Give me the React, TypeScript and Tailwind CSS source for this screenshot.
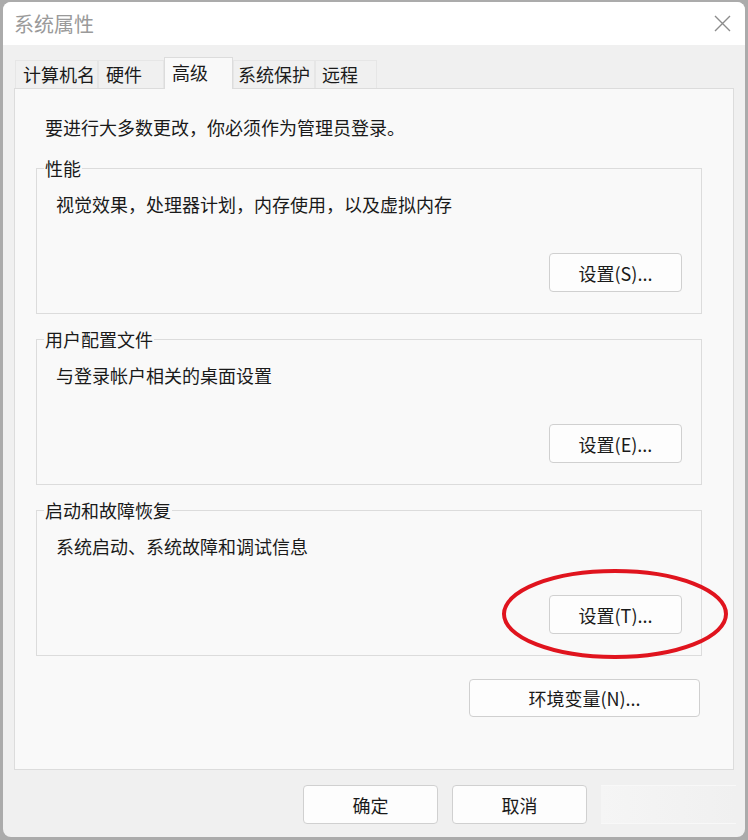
import React from "react";

const font = { fontFamily: '"Noto Sans CJK SC", "Microsoft YaHei", sans-serif' };

function Btn({ label, w, h = 39 }: { label: string; w: number; h?: number }) {
  return (
    <div
      className="flex items-center justify-center rounded-[4px] border border-[#d0d0d0] bg-[#fdfdfd] text-[18px] leading-[24px] text-[#1a1a1a]"
      style={{ width: w, height: h }}
    >
      {label}
    </div>
  );
}

function Group({ legend, text, btn }: { legend: string; text: string; btn: string }) {
  return (
    <fieldset className="ml-[21px] w-[666px] border border-[#dcdcdc] pl-[7px] pr-[19px] pb-[21px]">
      <legend className="px-[1px] text-[18px] leading-[24px] text-[#1a1a1a]">{legend}</legend>
      <p className="ml-[12px] mt-[12px] text-[18px] leading-[24px] text-[#1a1a1a]">{text}</p>
      <div className="mt-[37px] flex justify-end">
        <Btn label={btn} w={133} />
      </div>
    </fieldset>
  );
}

function Tab({ label, w, pl, selected }: { label: string; w: number; pl: number; selected?: boolean }) {
  return (
    <div
      className={
        selected
          ? "relative z-10 -mb-px flex h-[32px] items-center self-end border-x border-t border-[#dcdcdc] bg-[#f9f9f9] pb-[4px] text-[18px] leading-[24px] text-[#1a1a1a]"
          : "flex h-[28px] items-center self-end border-x border-t border-[#e6e6e6] bg-[#f0f0f0] pb-[1px] text-[18px] leading-[24px] text-[#1a1a1a]"
      }
      style={{ width: w, paddingLeft: pl }}
    >
      {label}
    </div>
  );
}

export default function App() {
  return (
    <div className="relative h-[840px] w-[748px] overflow-hidden bg-[#ababab] pl-[3px] pr-[3px] pt-[2px] pb-[3px]" style={font}>
      <div className="flex h-[835px] w-[742px] flex-col overflow-hidden rounded-[8px] bg-[#f0f0f0]">
        <div className="flex h-[43px] items-center justify-between bg-white pl-[11px] pr-[14px]">
          <span className="text-[20px] leading-[26px] text-[#9a9a9a]">系统属性</span>
          <svg width="17" height="17" viewBox="0 0 17 17">
            <path d="M1 1 L16 16 M16 1 L1 16" stroke="#8c8c8c" strokeWidth="1.4" fill="none" />
          </svg>
        </div>
        <div className="flex flex-col pl-[11px] pt-[12px]">
          <div className="ml-[1px] flex h-[31px] items-end">
            <Tab label="计算机名" w={83} pl={7} />
            <Tab label="硬件" w={66} pl={7} />
            <Tab label="高级" w={69} pl={7} selected />
            <Tab label="系统保护" w={82} pl={4} />
            <Tab label="远程" w={62} pl={6} />
          </div>
          <div className="flex h-[682px] w-[720px] flex-col border border-[#dcdcdc] bg-[#f9f9f9]">
            <p className="ml-[30px] mt-[26px] text-[18px] leading-[24px] text-[#1a1a1a]">
              要进行大多数更改，你必须作为管理员登录。
            </p>
            <div className="mt-[17px] flex flex-col gap-[13px]">
              <Group legend="性能" text="视觉效果，处理器计划，内存使用，以及虚拟内存" btn="设置(S)..." />
              <Group legend="用户配置文件" text="与登录帐户相关的桌面设置" btn="设置(E)..." />
              <Group legend="启动和故障恢复" text="系统启动、系统故障和调试信息" btn="设置(T)..." />
            </div>
            <div className="mr-[33px] mt-[23px] flex justify-end">
              <Btn label="环境变量(N)..." w={231} h={38} />
            </div>
          </div>
          <div className="mt-[15px] flex justify-end gap-[14px] pr-[9px]">
            <Btn label="确定" w={135} />
            <Btn label="取消" w={135} />
            <div className="h-[39px] w-[135px] border-y border-[#f8f8f8] bg-gradient-to-r from-[#f5f5f5] to-[#f0f0f0]" />
          </div>
        </div>
      </div>
      <svg className="absolute left-[499px] top-[566px]" width="232" height="96" viewBox="0 0 232 96">
        <ellipse cx="116" cy="48" rx="111" ry="43" fill="none" stroke="#e0141e" strokeWidth="4" />
      </svg>
    </div>
  );
}
